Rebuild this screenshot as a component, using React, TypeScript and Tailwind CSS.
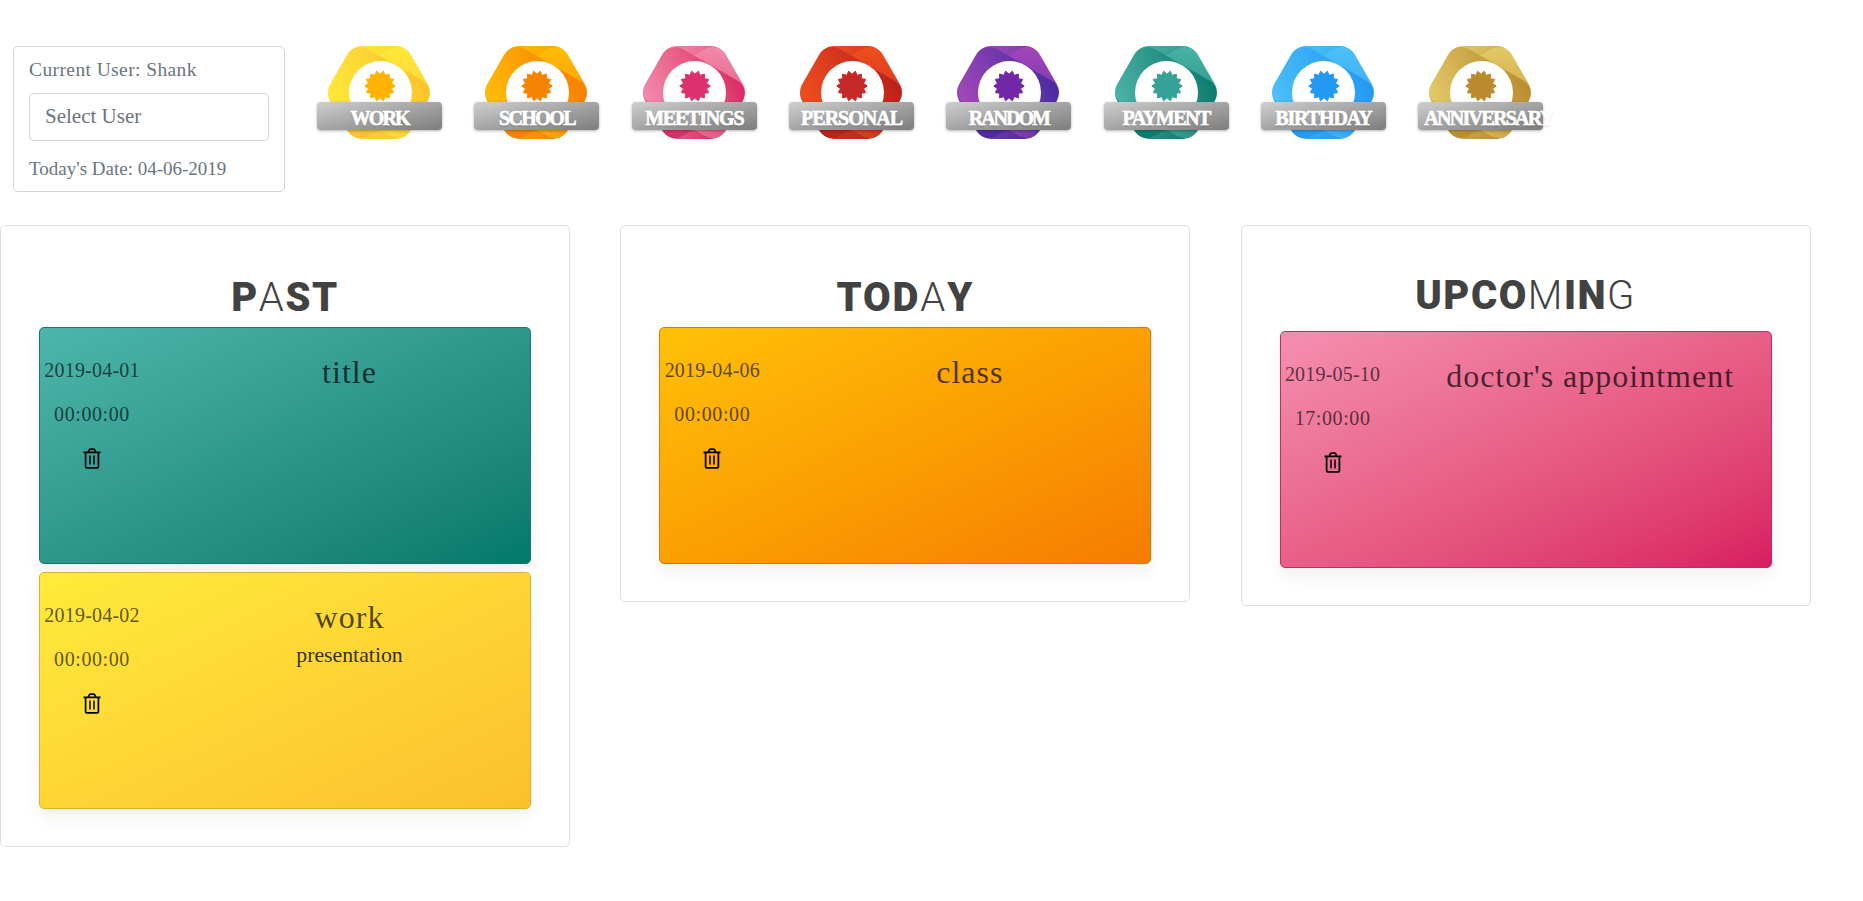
import React from "react";

type Badge = { label: string; grad: string; star: string; text: string };

const badges: Badge[] = [
  { label: "WORK", grad: "from-[#ffeb3b] to-[#fbc02d]", star: "text-[#ffb300]", text: "tracking-[-1.8px]" },
  { label: "SCHOOL", grad: "from-[#ffc107] to-[#f57c00]", star: "text-[#f68401]", text: "tracking-[-1.6px]" },
  { label: "MEETINGS", grad: "from-[#f48fb1] to-[#d81b60]", star: "text-[#dc306f]", text: "tracking-[-1.2px]" },
  { label: "PERSONAL", grad: "from-[#f4511e] to-[#b71c1c]", star: "text-[#c62828]", text: "tracking-[-1px]" },
  { label: "RANDOM", grad: "from-[#ab47bc] to-[#4527a0]", star: "text-[#7127a8]", text: "tracking-[-2px]" },
  { label: "PAYMENT", grad: "from-[#4db6ac] to-[#00796b]", star: "text-[#36a297]", text: "tracking-[-1.5px]" },
  { label: "BIRTHDAY", grad: "from-[#4fc3f7] to-[#2196f3]", star: "text-[#2499f3]", text: "tracking-[-1.1px]" },
  { label: "ANNIVERSARY", grad: "from-[#e6ce6a] to-[#b7892b]", star: "text-[#b98b2d]", text: "tracking-[-1.7px]" },
];

const starPoints = Array.from({ length: 28 }, (_, i) => {
  const r = i % 2 ? 11.8 : 15.2;
  const a = ((i + 1) * Math.PI) / 14;
  return `${(16 + r * Math.sin(a)).toFixed(2)},${(16 - r * Math.cos(a)).toFixed(2)}`;
}).join(" ");

function BadgeItem({ label, grad, star, text }: Badge) {
  return (
    <div className="flex w-[157.3px] shrink-0 justify-center">
      <div className={`relative h-[93px] w-[64px] rounded-[15px] bg-linear-to-br ${grad}`}>
        <div className={`absolute inset-0 rotate-60 rounded-[15px] bg-linear-to-br ${grad}`} />
        <div className={`absolute inset-0 -rotate-60 rounded-[15px] bg-linear-to-br ${grad}`} />
        <div className={`absolute top-[15px] left-[1.5px] flex h-[63px] w-[63px] justify-center rounded-full bg-white pt-[9px] ${star}`}>
          <svg className="h-8 w-8" viewBox="0 0 32 32" fill="currentColor" stroke="currentColor" strokeWidth="1" strokeLinejoin="round">
            <polygon points={starPoints} />
          </svg>
        </div>
        <div className="absolute top-[56px] left-[-30px] h-7 w-[125px] rounded-[4px] bg-linear-to-br from-[#cfcfcf] to-[#7d7d7d] px-[6px] pt-[5px] shadow-[0_1px_3px_rgba(0,0,0,0.3)]">
          <div className={`text-center font-['Liberation_Serif',serif] text-[20px] leading-[22px] font-bold whitespace-nowrap text-white [-webkit-text-stroke:0.6px_white] [text-shadow:0_2px_2px_rgba(0,0,0,0.1)] ${text}`}>{label}</div>
        </div>
      </div>
    </div>
  );
}

function Trash() {
  return (
    <svg className="h-[21px] w-[18px]" viewBox="0 0 18 21" fill="none" stroke="black" strokeWidth="1.7">
      <path d="M.5 4.300h17M5 4.300L6.300 1.900Q6.700 1.200 7.600 1.200h2.800Q11.300 1.200 11.700 1.900L13 4.300M2.600 4.300V18.700q0 1.100 1.100 1.100h10.600q1.100 0 1.100-1.100V4.300" />
      <path d="M7 7.500v9M11 7.500v9" strokeWidth="1.500" />
    </svg>
  );
}

type EventData = { date: string; time: string; title: string; note?: string; colors: string };

function EventCard({ date, time, title, note, colors }: EventData) {
  return (
    <div className={`flex h-[237px] rounded-[5px] border bg-linear-to-br font-['Liberation_Serif',serif] shadow-[0_8px_16px_rgba(0,0,0,0.06)] ${colors}`}>
      <div className="flex w-[104px] shrink-0 flex-col items-center pt-[28px] text-[20px] text-black/65">
        <div className="h-11 tracking-[0.2px] leading-[28px]">{date}</div>
        <div className="h-12 tracking-[0.6px] leading-[28px]">{time}</div>
        <Trash />
      </div>
      <div className="grow pt-[25px] pr-[15px] pl-[40px] text-center">
        <div className="text-[32px] leading-[38px] tracking-[1px] text-black/70">{title}</div>
        {note && <div className="pt-[4px] text-[21.8px] leading-[30px] text-black/80">{note}</div>}
      </div>
    </div>
  );
}

const thinLetters = "AMG";

function Column({ title, events, head }: { title: string; events: EventData[]; head: string }) {
  return (
    <section className="w-[570px] rounded-[5px] border border-[#dfdfdf] px-[38px] pb-[37px]">
      <h2 className={`text-center font-[Roboto,sans-serif] text-[40px] leading-[42px] font-black text-[#424242] ${head}`}>
        {title.split("").map((c, i) => (
          <span key={i} className={thinLetters.includes(c) ? "font-light" : "font-black"}>{c}</span>
        ))}
      </h2>
      <div className="flex flex-col gap-2">
        {events.map((e) => (
          <EventCard key={e.date} {...e} />
        ))}
      </div>
    </section>
  );
}

export default function App() {
  return (
    <main className="min-h-[901px] w-[1863px] overflow-hidden bg-white pt-[46px]">
      <header className="flex h-[179px] items-start">
        <div className="ml-[13px] h-[146px] w-[272px] shrink-0 rounded-[5px] border border-[#ced4da] px-[15px] font-['Liberation_Serif',serif] text-[#6c757d]">
          <div className="pt-[8px] text-[19.5px] leading-[30px] tracking-[0.4px]">Current User: Shank</div>
          <div className="mt-[8px] flex h-[48px] items-center rounded-[5px] border border-[#ced4da] pl-[15px] text-[21px]">Select User</div>
          <div className="mt-[13px] text-[19px] leading-[30px]">Today's Date: 04-06-2019</div>
        </div>
        <div className="ml-[15.500px] flex">
          {badges.map((b) => (
            <BadgeItem key={b.label} {...b} />
          ))}
        </div>
      </header>
      <div className="flex items-start gap-[50.3px]">
        <Column
          title="PAST"
          head="h-[101px] pt-[51px] tracking-[1.6px]"
          events={[
            { date: "2019-04-01", time: "00:00:00", title: "title", colors: "from-[#4db6ac] to-[#00796b] border-[#16796d]" },
            { date: "2019-04-02", time: "00:00:00", title: "work", note: "presentation", colors: "from-[#ffeb3b] to-[#fbc02d] border-[#dcb02c]" },
          ]}
        />
        <Column
          title="TODAY"
          head="h-[101px] pt-[51px] tracking-[1.9px]"
          events={[{ date: "2019-04-06", time: "00:00:00", title: "class", colors: "from-[#ffc107] to-[#f57c00] border-[#d97a08]" }]}
        />
        <Column
          title="UPCOMING"
          head="h-[105px] pt-[49px] tracking-[1.5px]"
          events={[{ date: "2019-05-10", time: "17:00:00", title: "doctor's appointment", colors: "from-[#f48fb1] to-[#d81b60] border-[#c52b62]" }]}
        />
      </div>
    </main>
  );
}
